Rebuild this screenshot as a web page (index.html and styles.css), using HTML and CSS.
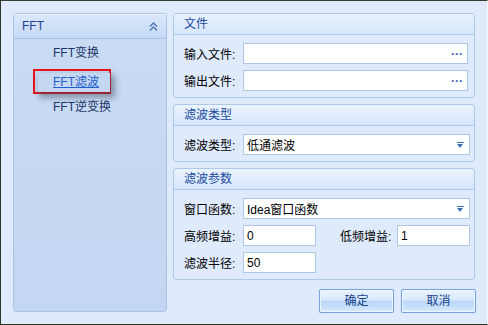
FILE: index.html
```html
<!DOCTYPE html>
<html>
<head>
<meta charset="utf-8">
<link rel="stylesheet" href="styles.css">
</head>
<body>
<div class="window">
  <div class="content">
    <div class="navpanel">
      <div class="navhead">
        <span class="navtitle">FFT</span>
        <svg class="chev" width="9" height="9" viewBox="0 0 9 9"><path d="M1 4.5 L4.5 1 L8 4.5 M1 8.5 L4.5 5 L8 8.5" fill="none" stroke="#4a76b4" stroke-width="1.3"/></svg>
      </div>
      <div class="navitems">
        <div class="navitem">FFT变换</div>
        <div class="navitem selected"><span class="link">FFT滤波</span></div>
        <div class="navitem">FFT逆变换</div>
      </div>
    </div>
    <div class="right">
      <div class="group g1">
        <div class="ghead">文件</div>
        <div class="gbody">
          <div class="row"><span class="lbl">输入文件:</span><div class="field wide"><span class="dots">···</span></div></div>
          <div class="row"><span class="lbl">输出文件:</span><div class="field wide"><span class="dots">···</span></div></div>
        </div>
      </div>
      <div class="group g2">
        <div class="ghead">滤波类型</div>
        <div class="gbody">
          <div class="row"><span class="lbl">滤波类型:</span><div class="field combo"><span class="val">低通滤波</span><span class="arrow"></span></div></div>
        </div>
      </div>
      <div class="group g3">
        <div class="ghead">滤波参数</div>
        <div class="gbody">
          <div class="row"><span class="lbl">窗口函数:</span><div class="field combo"><span class="val">Idea窗口函数</span><span class="arrow"></span></div></div>
          <div class="row"><span class="lbl">高频增益:</span><div class="field short"><span class="val">0</span></div><span class="lbl lbl2">低频增益:</span><div class="field short2"><span class="val">1</span></div></div>
          <div class="row"><span class="lbl">滤波半径:</span><div class="field short"><span class="val">50</span></div></div>
        </div>
      </div>
      <div class="buttons">
        <div class="btn">确定</div>
        <div class="btn">取消</div>
      </div>
    </div>
  </div>
</div>
</body>
</html>
```
FILE: styles.css
```css
* { box-sizing: border-box; }
html, body { margin: 0; padding: 0; }
body {
  width: 488px; height: 325px; overflow: hidden;
  font-family: "Liberation Sans", "Noto Sans CJK SC", sans-serif;
  font-size: 12px;
  color: #000;
}
.window {
  width: 488px; height: 325px;
  background: #dfeafc;
  border-left: 1px solid #2e3526;
  border-top: 1px solid #3a3a34;
  border-bottom: 1px solid #2e3526;
  border-right: 1px solid #f4f8fe;
}
.content {
  display: flex;
  padding: 12px 0 0 12px;
  gap: 6px;
}
.navpanel {
  width: 154px; height: 299px;
  border: 1px solid #aac3e6;
  border-radius: 3px;
  display: flex; flex-direction: column;
  overflow: hidden;
}
.navhead {
  height: 25px;
  display: flex; align-items: center; justify-content: space-between;
  padding: 0 8px 0 8px;
  background: linear-gradient(#dbe8fa, #c5d9f4);
  border-bottom: 1px solid #a6c0e4;
  box-shadow: inset 0 1px 0 #eef5fe;
}
.navtitle { color: #1e3f8f; font-size: 12px; }
.chev { margin-top: 1px; }
.navitems {
  display: flex; flex-direction: column; padding-top: 1px; flex: 1;
  background: linear-gradient(#c9dcf4, #c3d6f1);
}
.navitem {
  height: 27px; line-height: 27px;
  padding-left: 39px;
  color: #1b3566;
}
.navitem.selected {
  margin-left: 19px; width: 78px; height: 25px;
  padding: 2px 0 0 3px;
  border: 2px solid #e8141b;
  margin-top: 2px;
  line-height: 17px;
}
.navitem.selected .link {
  display: inline-block;
  color: #1f5fd0; text-decoration: underline;
  padding: 0 6px 0 15px;
  width: 72px; height: 19px; line-height: 18px;
  box-shadow: 3px 4px 6px 2px rgba(50,60,80,0.45);
  background: #c4d7f0;
}
.right {
  width: 302px;
  display: flex; flex-direction: column;
}
.group {
  border: 1px solid #aec8ea;
  border-radius: 3px;
  background: #dfeafc;
}
.g1 { height: 85px; }
.g2 { height: 58px; margin-top: 6px; }
.g3 { height: 112px; margin-top: 6px; }
.ghead {
  height: 21px;
  line-height: 20px;
  padding-left: 10px;
  color: #1c4a9c;
  background: linear-gradient(#eaf3fe, #d6e6fb);
  border-bottom: 1px solid #aec8ea;
  border-radius: 3px 3px 0 0;
}
.gbody {
  padding: 8px 0 0 10px;
  display: flex; flex-direction: column; gap: 6px;
}
.row { display: flex; align-items: center; height: 21px; }
.lbl { width: 59px; color: #000; }
.lbl2 { width: 57px; margin-left: 24px; }
.field {
  height: 21px;
  border: 1px solid #aec5e6;
  background: #fff;
  display: flex; align-items: center;
  padding-left: 3px;
}
.wide { width: 225px; justify-content: flex-end; padding-right: 4px; }
.combo { width: 227px; justify-content: space-between; padding-right: 5px; }
.short { width: 73px; }
.short2 { width: 73px; }
.val { color: #000; }
.dots { color: #3c6db3; font-weight: bold; font-size: 12px; line-height: 10px; }
.arrow {
  width: 7px; height: 5px; position: relative;
  border-top: 1px solid #3c6db3;
}
.arrow::after {
  content: ""; position: absolute; left: 0; top: 1px;
  border-left: 3.5px solid transparent; border-right: 3.5px solid transparent;
  border-top: 4px solid #3c6db3;
}
.buttons {
  display: flex; justify-content: flex-end; gap: 7px;
  margin-top: 9px; margin-right: -1px;
}
.btn {
  width: 75px; height: 24px;
  border: 1px solid #78a3da;
  border-radius: 2px;
  text-align: center; line-height: 22px;
  color: #15428b;
  background: linear-gradient(#e9f3fe 0%, #d9e9fc 45%, #bcd7f7 52%, #c8e1fa 80%, #dcedfd 100%);
  box-shadow: inset 0 0 0 1px #eef6ff, 0 0 1px #a9c7ee;
}
```
